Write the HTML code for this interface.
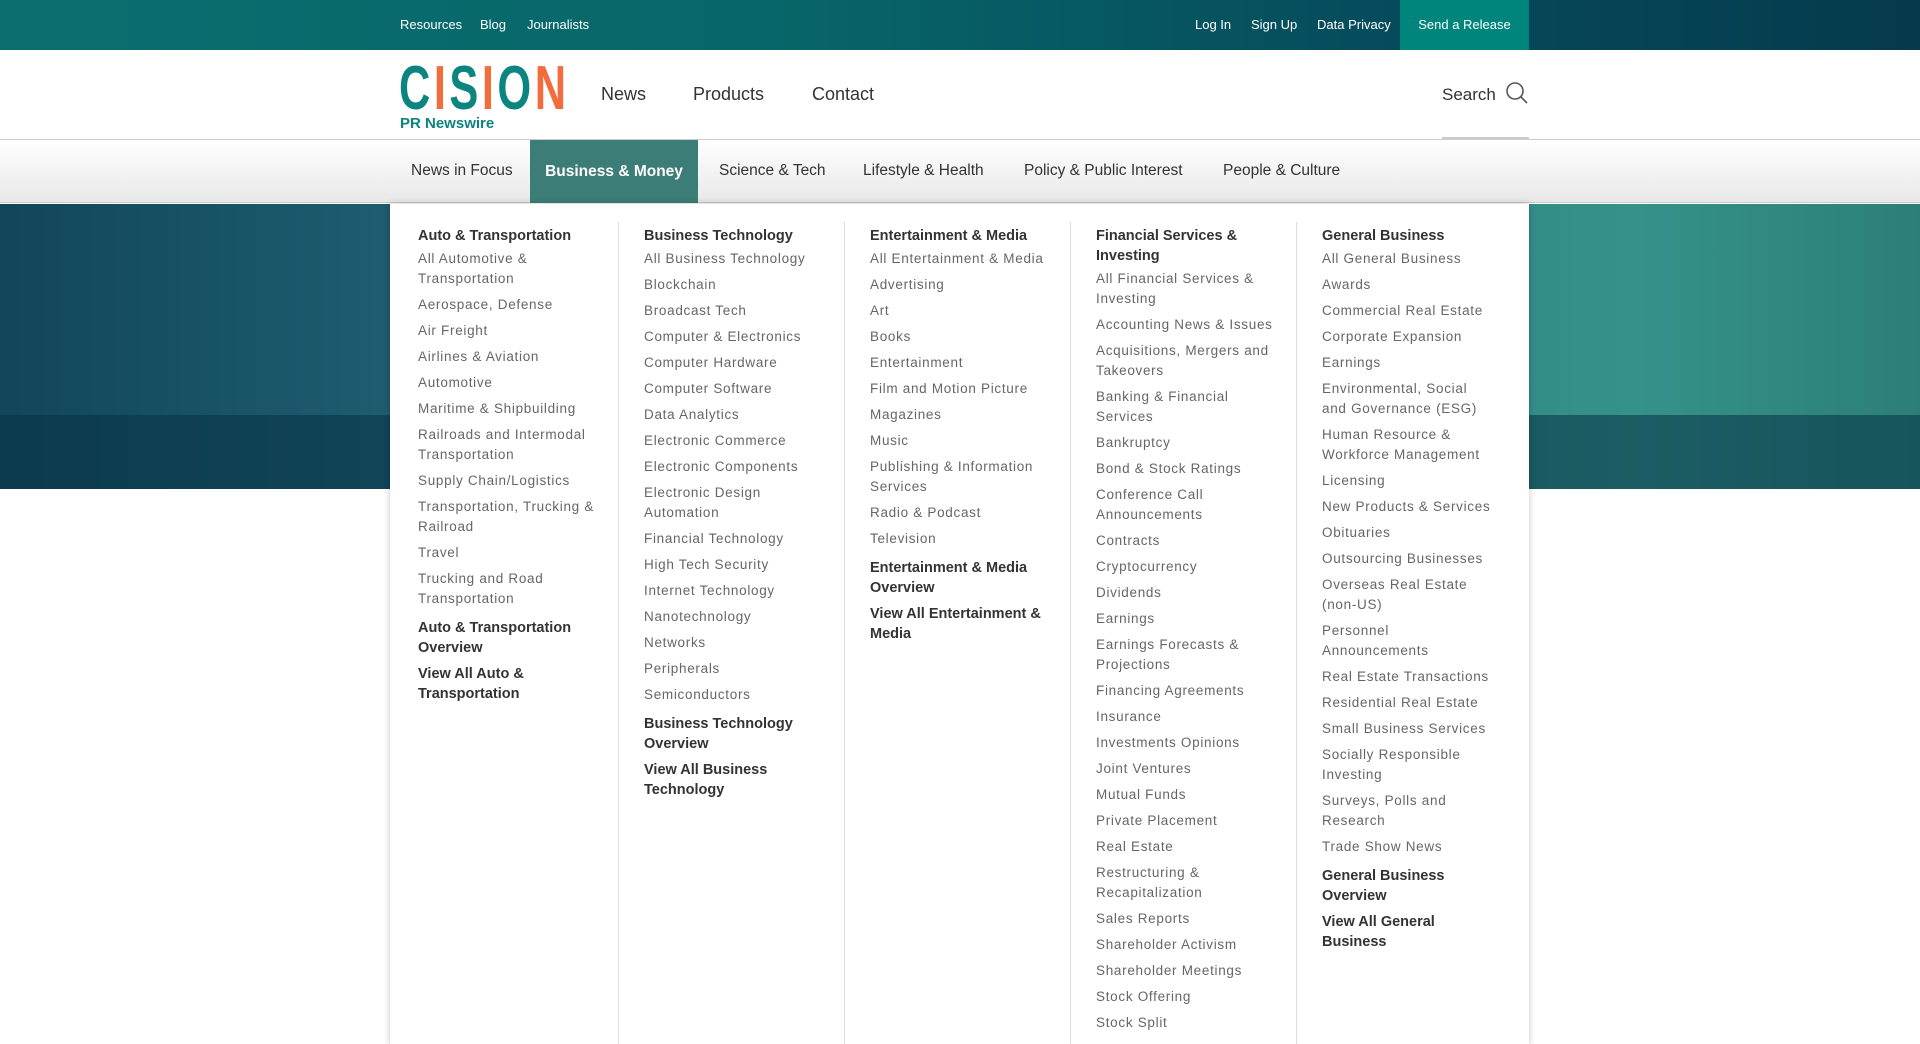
<!DOCTYPE html>
<html><head><meta charset="utf-8"><style>
*{margin:0;padding:0;box-sizing:border-box}
body{width:1920px;height:1040px;overflow:hidden;font-family:"Liberation Sans",sans-serif;background:#fff;position:relative}
.top{position:absolute;left:0;top:0;width:1920px;height:50px;background:linear-gradient(90deg,#0a6e6f 0%,#076669 40%,#06495a 75%,#053a4c 100%)}
.top a{position:absolute;top:17px;color:#fff;font-size:13px;text-decoration:none}
.send{position:absolute;left:1400px;top:0;width:129px;height:50px;background:#00857c;color:#fff;font-size:13px;text-align:center;line-height:50px}
.hdr{position:absolute;left:0;top:50px;width:1920px;height:90px;background:#fff;border-bottom:1px solid #ccc}
.logo{position:absolute;left:399px;top:11px;font-size:62px;font-weight:bold;color:#0c8580;letter-spacing:5px;line-height:56px;transform:scaleX(.7);transform-origin:left}
.logo span{color:#f36c3d}
.prn{position:absolute;left:400px;top:65px;font-size:15px;font-weight:bold;color:#0c8580}
.nav{position:absolute;top:34px;font-size:18px;color:#333}
.search{position:absolute;left:1442px;top:31px;font-size:17px;color:#333}
.sline{position:absolute;left:1442px;top:137px;width:87px;height:3px;background:#ccc}
.cat{position:absolute;left:0;top:140px;width:1920px;height:63px;background:linear-gradient(#fff,#e8e8e8);border-bottom:1px solid #ccc}
.cat div{position:absolute;top:22px;font-size:15.5px;color:#333}
.act{position:absolute;left:530px;top:140px;width:168px;height:63px;background:#3d7d77;color:#fff;font-weight:bold;font-size:15.5px;text-align:center;line-height:63px}
.hero{position:absolute;left:0;top:204px;width:1920px;height:285px;background:linear-gradient(90deg,#12465a 0%,#1e5c6e 20%,#2a7077 40%,#2d8580 70%,#35928a 85%,#2c7f78 100%)}
.band{position:absolute;left:0;top:211px;width:1920px;height:74px;background:rgba(8,50,70,.55)}
.panel{position:absolute;left:390px;top:204px;width:1139px;height:840px;background:#fff;box-shadow:0 0 6px rgba(0,0,0,.25);display:flex;padding-top:18px}
.col{position:relative;padding:4px 0 0 25px;width:226px}
.col+.col{border-left:1px solid #ddd}
.col:first-child{padding-left:28px;width:228px}
.col h4{font-size:14.5px;font-weight:bold;color:#333;line-height:20px;margin-bottom:3px;width:175px}
.col p{font-size:13.5px;color:#666;line-height:20px;margin-bottom:6px;width:183px;letter-spacing:.7px}
.c2 p{width:180px}.c3 p{width:186px}.c4 p{width:180px}.c5 p{width:171px}
.col b{display:block;font-size:14.5px;color:#333;line-height:20px;margin-top:9px;margin-bottom:-3px;width:180px}
</style></head><body>
<div class="top">
<a style="left:400px">Resources</a><a style="left:480px">Blog</a><a style="left:527px">Journalists</a>
<a style="left:1195px">Log In</a><a style="left:1251px">Sign Up</a><a style="left:1317px">Data Privacy</a>
</div>
<div class="send">Send a Release</div>
<div class="hdr">
<div class="logo">C<span>I</span>S<span>I</span>O<span>N</span></div>
<div class="prn">PR Newswire</div>
<div class="nav" style="left:601px">News</div><div class="nav" style="left:693px">Products</div><div class="nav" style="left:812px">Contact</div>
<div class="search">Search <svg width="24" height="24" viewBox="0 0 24 24" style="vertical-align:-5px;margin-left:4px"><circle cx="10" cy="10" r="8" fill="none" stroke="#555" stroke-width="1.6"/><path d="M16 16l6 6" stroke="#555" stroke-width="1.6"/></svg></div>
</div>
<div class="sline"></div>
<div class="cat">
<div style="left:411px">News in Focus</div><div style="left:719px">Science &amp; Tech</div><div style="left:863px">Lifestyle &amp; Health</div><div style="left:1024px">Policy &amp; Public Interest</div><div style="left:1223px">People &amp; Culture</div>
</div>
<div class="act">Business &amp; Money</div>
<div class="hero"><div class="band"></div></div>
<div class="panel">
<div class="col"><h4>Auto &amp; Transportation</h4>
<p>All Automotive &amp; Transportation</p><p>Aerospace, Defense</p><p>Air Freight</p><p>Airlines &amp; Aviation</p><p>Automotive</p><p>Maritime &amp; Shipbuilding</p><p>Railroads and Intermodal Transportation</p><p>Supply Chain/Logistics</p><p>Transportation, Trucking &amp; Railroad</p><p>Travel</p><p>Trucking and Road Transportation</p>
<b>Auto &amp; Transportation Overview</b><b>View All Auto &amp; Transportation</b></div>
<div class="col c2"><h4>Business Technology</h4>
<p>All Business Technology</p><p>Blockchain</p><p>Broadcast Tech</p><p>Computer &amp; Electronics</p><p>Computer Hardware</p><p>Computer Software</p><p>Data Analytics</p><p>Electronic Commerce</p><p>Electronic Components</p><p>Electronic Design Automation</p><p>Financial Technology</p><p>High Tech Security</p><p>Internet Technology</p><p>Nanotechnology</p><p>Networks</p><p>Peripherals</p><p>Semiconductors</p>
<b>Business Technology Overview</b><b>View All Business Technology</b></div>
<div class="col c3"><h4>Entertainment &amp; Media</h4>
<p>All Entertainment &amp; Media</p><p>Advertising</p><p>Art</p><p>Books</p><p>Entertainment</p><p>Film and Motion Picture</p><p>Magazines</p><p>Music</p><p>Publishing &amp; Information Services</p><p>Radio &amp; Podcast</p><p>Television</p>
<b>Entertainment &amp; Media Overview</b><b>View All Entertainment &amp; Media</b></div>
<div class="col c4"><h4>Financial Services &amp; Investing</h4>
<p>All Financial Services &amp; Investing</p><p>Accounting News &amp; Issues</p><p>Acquisitions, Mergers and Takeovers</p><p>Banking &amp; Financial Services</p><p>Bankruptcy</p><p>Bond &amp; Stock Ratings</p><p>Conference Call Announcements</p><p>Contracts</p><p>Cryptocurrency</p><p>Dividends</p><p>Earnings</p><p>Earnings Forecasts &amp; Projections</p><p>Financing Agreements</p><p>Insurance</p><p>Investments Opinions</p><p>Joint Ventures</p><p>Mutual Funds</p><p>Private Placement</p><p>Real Estate</p><p>Restructuring &amp; Recapitalization</p><p>Sales Reports</p><p>Shareholder Activism</p><p>Shareholder Meetings</p><p>Stock Offering</p><p>Stock Split</p></div>
<div class="col c5"><h4>General Business</h4>
<p>All General Business</p><p>Awards</p><p>Commercial Real Estate</p><p>Corporate Expansion</p><p>Earnings</p><p>Environmental, Social and Governance (ESG)</p><p>Human Resource &amp; Workforce Management</p><p>Licensing</p><p>New Products &amp; Services</p><p>Obituaries</p><p>Outsourcing Businesses</p><p>Overseas Real Estate (non-US)</p><p>Personnel Announcements</p><p>Real Estate Transactions</p><p>Residential Real Estate</p><p>Small Business Services</p><p>Socially Responsible Investing</p><p>Surveys, Polls and Research</p><p>Trade Show News</p>
<b>General Business Overview</b><b>View All General Business</b></div>
</div>
</body></html>
